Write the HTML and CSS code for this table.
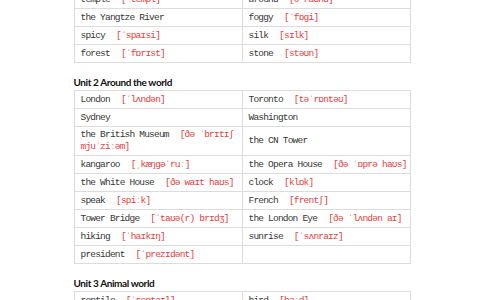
FILE: index.html
```html
<!DOCTYPE html>
<html lang="en">
<head>
<meta charset="utf-8">
<title>Vocabulary</title>
<link rel="stylesheet" href="styles.css">
</head>
<body>
<div class="page">
  <table class="vocab first">
    <tr><td>temple<span class="ph">[ˈtempl]</span></td><td>around<span class="ph">[əˈraʊnd]</span></td></tr>
    <tr><td>the Yangtze River</td><td>foggy<span class="ph">[ˈfɒgi]</span></td></tr>
    <tr><td>spicy<span class="ph">[ˈspaɪsi]</span></td><td>silk<span class="ph">[sɪlk]</span></td></tr>
    <tr><td>forest<span class="ph">[ˈfɒrɪst]</span></td><td>stone<span class="ph">[stəʊn]</span></td></tr>
  </table>

  <h2 class="unit">Unit 2 Around the world</h2>
  <table class="vocab">
    <tr><td>London<span class="ph">[ˈlʌndən]</span></td><td>Toronto<span class="ph">[təˈrɒntəʊ]</span></td></tr>
    <tr><td>Sydney</td><td>Washington</td></tr>
    <tr class="tall"><td class="wrap">the British Museum<span class="ph">[ðə ˈbrɪtɪʃ mjuˈziːəm]</span></td><td>the CN Tower</td></tr>
    <tr><td>kangaroo<span class="ph">[ˌkæŋgəˈruː]</span></td><td>the Opera House<span class="ph">[ðə ˈɒprə haʊs]</span></td></tr>
    <tr><td>the White House<span class="ph">[ðə waɪt haʊs]</span></td><td>clock<span class="ph">[klɒk]</span></td></tr>
    <tr><td>speak<span class="ph">[spiːk]</span></td><td>French<span class="ph">[frentʃ]</span></td></tr>
    <tr><td>Tower Bridge<span class="ph">[ˈtaʊə(r) brɪdʒ]</span></td><td>the London Eye<span class="ph">[ðə ˈlʌndən aɪ]</span></td></tr>
    <tr><td>hiking<span class="ph">[ˈhaɪkɪŋ]</span></td><td>sunrise<span class="ph">[ˈsʌnraɪz]</span></td></tr>
    <tr><td>president<span class="ph">[ˈprezɪdənt]</span></td><td></td></tr>
  </table>

  <h2 class="unit">Unit 3 Animal world</h2>
  <table class="vocab">
    <tr><td>reptile<span class="ph">[ˈreptaɪl]</span></td><td>bird<span class="ph">[bɜːd]</span></td></tr>
    <tr><td>&nbsp;</td><td>&nbsp;</td></tr>
  </table>
</div>
</body>
</html>
```

FILE: styles.css
```css
html, body {
  margin: 0;
  padding: 0;
  background: #ffffff;
}

.page {
  width: 337px;
  margin: -10px auto 0;
}

.vocab {
  width: 337px;
  table-layout: fixed;
  border-collapse: collapse;
  font-family: "Liberation Mono", "DejaVu Sans Mono", monospace;
  font-size: 9.5px;
  letter-spacing: -0.8px;
  line-height: 11px;
  color: #363636;
}

.vocab td {
  width: 50%;
  border: 1px solid #dcdcdc;
  padding: 3px 2px 3px 6px;
  vertical-align: middle;
  height: 11px;
  white-space: nowrap;
  overflow: hidden;
}

.vocab .tall td {
  padding-top: 2px;
  padding-bottom: 2px;
  line-height: 12px;
}

.vocab td.wrap {
  white-space: normal;
}

.ph {
  color: #e4413e;
  margin-left: 11px;
}

.unit {
  margin: 0;
  padding: 13px 0 2px;
  font-family: "Lato", "Open Sans", sans-serif;
  font-weight: 700;
  font-size: 10px;
  letter-spacing: -0.4px;
  line-height: 12px;
  color: #111111;
}
```
